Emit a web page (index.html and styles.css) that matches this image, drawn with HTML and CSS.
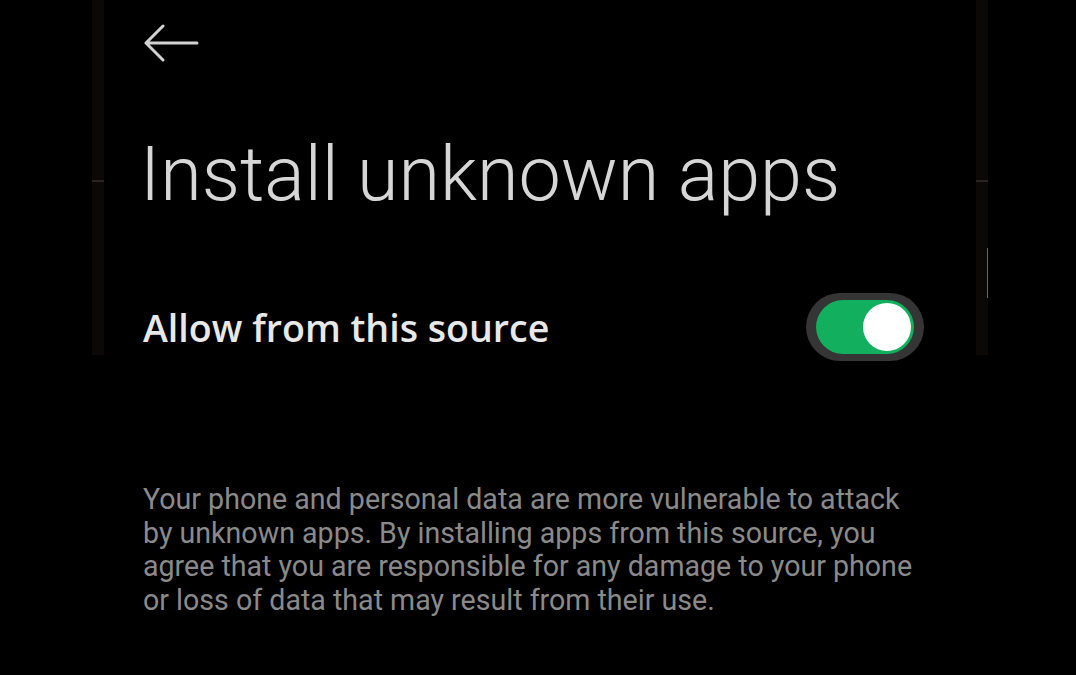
FILE: index.html
```html
<!DOCTYPE html>
<html lang="en">
<head>
    <meta charset="UTF-8">
    <meta name="viewport" content="width=device-width, initial-scale=1.0">
    <title>Install unknown apps</title>
    <link rel="stylesheet" href="styles.css">
</head>
<body>
    <div class="screen">
        <div class="edge"><div class="edge-line"></div></div>
        <div class="page">
            <button class="back-btn" aria-label="Back">
                <svg width="56" height="40" viewBox="0 0 56 40">
                    <path d="M19 3 L2 20 L19 37 M2 20 H53" fill="none" stroke="#d2d2d2" stroke-width="3" stroke-linecap="round" stroke-linejoin="round"/>
                </svg>
            </button>
            <h1 class="title">Install unknown apps</h1>
            <div class="setting-row">
                <span class="setting-label">Allow from this source</span>
                <label class="switch">
                    <input type="checkbox" checked>
                    <span class="track"><span class="knob"></span></span>
                </label>
            </div>
            <p class="warning">Your phone and personal data are more vulnerable to attack by unknown apps. By installing apps from this source, you agree that you are responsible for any damage to your phone or loss of data that may result from their use.</p>
        </div>
        <div class="edge edge-right"><div class="edge-line"></div><div class="edge-glint"></div></div>
    </div>
</body>
</html>
```

FILE: styles.css
```css
body {
    margin: 0;
    background: #000;
    font-family: Roboto, "Noto Sans", sans-serif;
    overflow: hidden;
}

.screen {
    display: flex;
    align-items: flex-start;
    padding-left: 92px;
    height: 675px;
}

.edge {
    width: 12px;
    height: 355px;
    background: #0c0805;
    position: relative;
    flex-shrink: 0;
}

.edge-line {
    position: absolute;
    left: 0;
    right: 0;
    top: 180px;
    height: 2px;
    background: #2a2521;
}

.edge-glint {
    position: absolute;
    right: 0;
    top: 248px;
    width: 1px;
    height: 50px;
    background: #6a6866;
}

.page {
    width: 872px;
    box-sizing: border-box;
    padding: 0 52px 0 39px;
}

.back-btn {
    display: block;
    background: none;
    border: none;
    padding: 0;
    margin: 23px 0 0 1px;
    height: 40px;
    cursor: pointer;
}

.title {
    margin: 66px 0 0 -3px;
    font-weight: 300;
    font-size: 75.5px;
    line-height: 90px;
    color: #d6d6d6;
}

.setting-row {
    display: flex;
    align-items: center;
    justify-content: space-between;
    margin-top: 74px;
}

.setting-label {
    font-family: "Open Sans", "Noto Sans", sans-serif;
    font-weight: 600;
    font-size: 37.6px;
    color: #e8e8e8;
}

.switch {
    display: flex;
    width: 118px;
    height: 68px;
    box-sizing: border-box;
    padding: 7px 10px;
    border-radius: 34px;
    background: #353535;
}

.switch input {
    display: none;
}

.track {
    flex: 1;
    display: flex;
    align-items: center;
    justify-content: flex-end;
    border-radius: 27px;
    background: #12b05e;
}

.knob {
    width: 48px;
    height: 48px;
    margin-right: 3px;
    border-radius: 50%;
    background: #fff;
}

.warning {
    margin: 122px 0 0;
    font-size: 28.6px;
    line-height: 33.5px;
    color: #8a8a8a;
}
```
